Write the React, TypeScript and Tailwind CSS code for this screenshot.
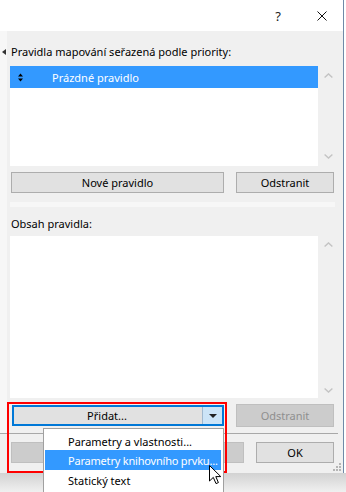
import React from "react";

function ChevUp() {
  return (
    <svg width="9" height="5" viewBox="0 0 9 5">
      <path d="M0.6 4.5 L4.5 0.9 L8.4 4.5" fill="none" stroke="#c4c4c4" strokeWidth="1.4" />
    </svg>
  );
}
function ChevDown() {
  return (
    <svg width="9" height="5" viewBox="0 0 9 5">
      <path d="M0.6 0.5 L4.5 4.1 L8.4 0.5" fill="none" stroke="#c4c4c4" strokeWidth="1.4" />
    </svg>
  );
}

export default function App() {
  return (
    <div className="relative w-[346px] h-[492px] overflow-hidden bg-white font-['Noto_Sans',sans-serif] text-[11px] text-black leading-none whitespace-nowrap">
      {/* window */}
      <div className="w-[344px] h-[473px] border-r border-[#6f8aa8] flex flex-col">
        {/* title bar */}
        <div className="h-[31px] bg-white flex items-center justify-end pr-[16px]">
          <span className="text-[13px] text-[#222] mr-[36px] mt-[1px]">?</span>
          <svg width="10" height="10" viewBox="0 0 10 10" className="mt-[1px]">
            <path d="M0.5 0.5 L9.5 9.5 M9.5 0.5 L0.5 9.5" stroke="#111" strokeWidth="1" />
          </svg>
        </div>
        {/* body */}
        <div className="flex-1 bg-[#f0f0f0] flex flex-col">
          <div className="h-[402px] flex">
            <div className="w-[7px] bg-[#f7f7f7] pt-[18px] pl-[2px]">
              <svg width="4" height="6" viewBox="0 0 4 6">
                <path d="M4 0 L0 3 L4 6 Z" fill="#333" />
              </svg>
            </div>
            <div className="flex-1 pl-[3px] flex flex-col">
              <div className="mt-[12px] ml-[1px] h-[16px] flex items-center">
                Pravidla mapování seřazená podle priority:
              </div>
              <div className="mt-[7px] flex h-[100px]">
                <div className="w-[308px] bg-white">
                  <div className="h-[22px] bg-[#3399ff] flex items-center pl-[8px]">
                    <svg width="5" height="9" viewBox="0 0 5 9">
                      <path d="M0 3.5 L2.5 0.5 L5 3.5 Z M0 5.5 L5 5.5 L2.5 8.5 Z" fill="#000" />
                    </svg>
                    <span className="ml-[29px] text-white">Prázdné pravidlo</span>
                  </div>
                </div>
                <div className="w-[20px] flex flex-col items-center justify-between pt-[7px] pb-[7px]">
                  <ChevUp />
                  <ChevDown />
                </div>
              </div>
              <div className="mt-[6px] flex h-[21px]">
                <div className="ml-[1px] w-[213px] border border-[#adadad] bg-[#e1e1e1] flex items-center justify-center">
                  Nové pravidlo
                </div>
                <div className="ml-[12px] w-[98px] border border-[#adadad] bg-[#e1e1e1] flex items-center justify-center">
                  Odstranit
                </div>
              </div>
              <div className="mt-[9px] h-[5px] w-[325px] bg-[#f7f7f7]" />
              <div className="mt-[8px] ml-[1px] h-[16px] flex items-center">Obsah pravidla:</div>
              <div className="mt-[5px] flex h-[162px]">
                <div className="w-[308px] bg-white" />
                <div className="w-[20px] flex flex-col items-center justify-between pt-[6px] pb-[5px]">
                  <ChevUp />
                  <ChevDown />
                </div>
              </div>
              <div className="mt-[7px] flex h-[22px]">
                <div className="ml-[2px] w-[212px] h-[21px] border-2 border-[#0078d7] bg-[#e1e1e1] flex">
                  <div className="flex-1 flex items-center justify-center pr-[2px]">Přidat...</div>
                  <div className="w-[1px] bg-[#9fb8cf]" />
                  <div className="w-[19px] bg-[#cce4f7] flex items-center justify-center">
                    <svg width="8" height="4" viewBox="0 0 8 4">
                      <path d="M0 0 L8 0 L4 4 Z" fill="#222" />
                    </svg>
                  </div>
                </div>
                <div className="ml-[12px] w-[98px] h-[23px] -mt-[1px] border border-[#bfbfbf] bg-[#cccccc] text-[#8f8f8f] flex items-center justify-center">
                  Odstranit
                </div>
              </div>
            </div>
          </div>
          {/* separator */}
          <div className="h-[1px] w-[338px] bg-[#a8a8a8]" />
          <div className="flex-1 flex pt-[8px] relative">
            <div className="ml-[11px] w-[233px] h-[21px] border border-[#bfbfbf] bg-[#cccccc]" />
            <div className="ml-[12px] w-[78px] h-[21px] border border-[#adadad] bg-[#e1e1e1] flex items-center justify-center">
              OK
            </div>
            <svg width="9" height="9" viewBox="0 0 9 9" className="absolute right-[1px] bottom-[1px]">
              <rect x="6" y="0" width="2" height="2" fill="#b5b5b5" />
              <rect x="3" y="3" width="2" height="2" fill="#b5b5b5" />
              <rect x="6" y="3" width="2" height="2" fill="#b5b5b5" />
              <rect x="0" y="6" width="2" height="2" fill="#b5b5b5" />
              <rect x="3" y="6" width="2" height="2" fill="#b5b5b5" />
              <rect x="6" y="6" width="2" height="2" fill="#b5b5b5" />
            </svg>
          </div>
        </div>
      </div>
      {/* desktop shadow below window */}
      <div className="h-[19px] w-[346px] bg-gradient-to-b from-[#d2d2d2] to-[#f0f0f0]" />

      {/* red annotation box */}
      <div className="absolute left-[7px] top-[402px] w-[220px] h-[71px] border-2 border-[#ff0000]" />

      {/* dropdown menu */}
      <div className="absolute left-[43px] top-[428px] w-[181px] h-[80px] bg-white border border-[#a0a0a0] p-[1px] pr-[2px]">
        <div className="h-[20px] flex items-center pl-[23px] pt-[2px]">Parametry a vlastnosti...</div>
        <div className="h-[20px] flex items-center pl-[23px] bg-[#3399ff] text-white tracking-[-0.2px]">Parametry knihovního prvku...</div>
        <div className="h-[20px] flex items-center pl-[23px]">Statický text</div>
      </div>

      {/* mouse cursor */}
      <svg width="14" height="21" viewBox="0 0 14 21" className="absolute left-[209px] top-[465px]">
        <path
          d="M0.5 0.5 L0.5 16 L4.3 12.4 L7 18.6 L9.4 17.6 L6.8 11.6 L11.8 11.6 Z"
          fill="#fff"
          stroke="#000"
          strokeWidth="1"
          strokeLinejoin="miter"
        />
      </svg>
    </div>
  );
}
